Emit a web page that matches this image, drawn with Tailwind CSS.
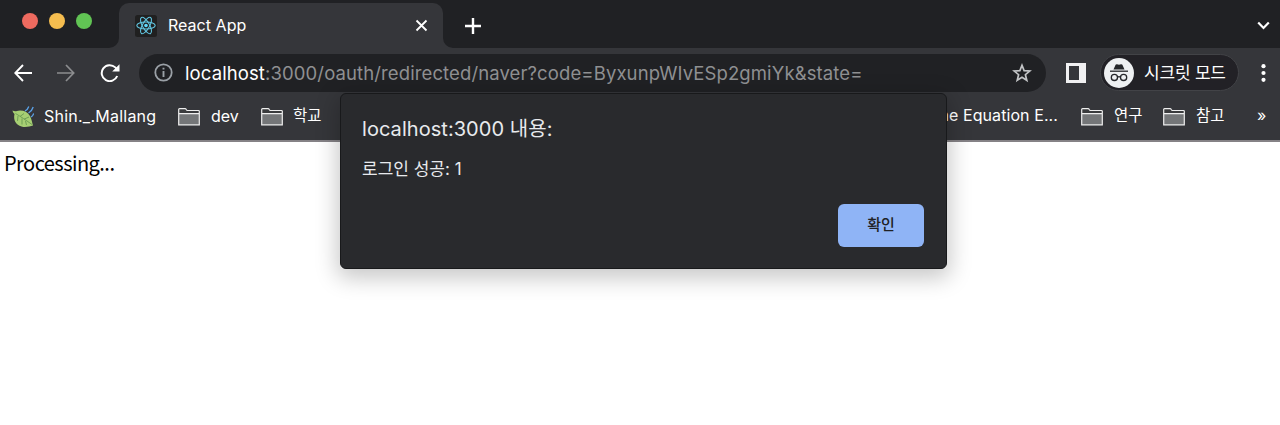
<!DOCTYPE html>
<html lang="ko">
<head>
<meta charset="utf-8">
<title>React App</title>
<script src="https://cdn.jsdelivr.net/npm/@tailwindcss/browser@4"></script>
</head>
<body class="h-[425px] w-[1280px] overflow-hidden bg-white font-['Inter','Noto_Sans_CJK_KR',sans-serif]">
<svg class="hidden">
  <symbol id="folder" viewBox="0 0 22 18">
    <path d="M.7 16.800V1.500Q.7.7 1.500.7H7Q7.800.7 8.300 1.500L9 2.500H20.500Q21.300 2.500 21.300 3.300V16.800Z" fill="#3a3b3d"/>
    <path d="M1 6H21V16.800H1Z" fill="#747678"/>
    <path d="M.7 16.800V1.500Q.7.7 1.500.7H7Q7.800.7 8.300 1.500L9 2.500H20.500Q21.300 2.500 21.300 3.300V16.800ZM1 5.600H21" fill="none" stroke="#eee" stroke-width="1.200"/>
  </symbol>
</svg>
<div class="relative h-[425px]">
  <header class="bg-[#35363a] text-white">
    <div class="flex h-12 bg-[#202124]">
      <div class="flex w-[119px] gap-[11px] pl-[22px] pt-[13px]">
        <span class="size-4 rounded-full bg-[#ee6a5f]"></span>
        <span class="size-4 rounded-full bg-[#f5bd4f]"></span>
        <span class="size-4 rounded-full bg-[#61c454]"></span>
      </div>
      <div class="relative mt-[3px] flex w-[324px] items-center rounded-t-[10px] bg-[#35363a] pl-4 pr-[15px]">
        <svg class="absolute -left-[10px] bottom-0" width="10" height="10"><path d="M10 0A10 10 0 0 1 0 10H10Z" fill="#35363a"/></svg>
        <svg class="absolute -right-[10px] bottom-0" width="10" height="10"><path d="M0 0A10 10 0 0 0 10 10H0Z" fill="#35363a"/></svg>
        <svg width="22" height="22" viewBox="0 0 22 22"><rect width="22" height="22" rx="2.500" fill="#202020"/><g fill="none" stroke="#61c5e0" stroke-width="1.100"><ellipse cx="11" cy="10.500" rx="9.200" ry="3.500"/><ellipse cx="11" cy="10.500" rx="9.200" ry="3.500" transform="rotate(60 11 10.500)"/><ellipse cx="11" cy="10.500" rx="9.200" ry="3.500" transform="rotate(120 11 10.500)"/></g><circle cx="11" cy="10.500" r="1.800" fill="#61dafb"/></svg>
        <span class="ml-[11px] pb-0.5 text-[16px] leading-6 tracking-[0.03px]">React App</span>
        <svg class="ml-auto" width="13" height="13"><path d="M1.500 1.500L11.500 11.500M11.500 1.500L1.500 11.500" stroke="#fff" stroke-width="1.800"/></svg>
      </div>
      <svg class="ml-[22px] mt-[18px]" width="16" height="16"><path d="M8 0V16M0 8H16" stroke="#fff" stroke-width="2.400"/></svg>
      <svg class="ml-auto mr-[10px] mt-[21px]" width="13" height="10"><path d="M1.200 1.500L6.500 7L11.800 1.500" fill="none" stroke="#fff" stroke-width="2.200"/></svg>
    </div>
    <div class="flex h-[49px] items-center">
      <svg class="ml-[14px]" width="18" height="18" viewBox="0 0 18 18"><path d="M9 1L1.300 9L9 17M1 9H18" fill="none" stroke="#fff" stroke-width="1.900"/></svg>
      <svg class="ml-[25px]" width="18" height="18" viewBox="0 0 18 18"><path d="M9 1L16.700 9L9 17M17 9H0" fill="none" stroke="#8c8d8f" stroke-width="1.700"/></svg>
      <svg class="ml-[25px]" width="20" height="18" viewBox="0 0 20 18"><path d="M17.200 12A8 8 0 1 1 15.300 3.400L17.500 5.600" fill="none" stroke="#fff" stroke-width="2"/><path d="M19.500 .2V7.500H12.200Z" fill="#fff"/></svg>
      <div class="ml-[19px] flex h-[38px] w-[907px] items-center rounded-full bg-[#202124] pl-[15px] pr-[14px]">
        <svg width="19" height="19" viewBox="0 0 19 19"><circle cx="9.500" cy="9.500" r="8.200" fill="none" stroke="#9aa0a6" stroke-width="1.800"/><path d="M9.500 4.700V6.600M9.500 8V14" stroke="#9aa0a6" stroke-width="1.900"/></svg>
        <span class="ml-3 whitespace-nowrap text-[18.500px] leading-6 tracking-[0.11px] text-[#8f9092]"><span class="text-white">localhost</span>:3000/oauth/redirected/naver?code=ByxunpWIvESp2gmiYk&amp;state=</span>
        <svg class="ml-auto" width="20" height="20" viewBox="0 0 20 20"><path d="M10 2.300L12.100 7.600L17.800 8L13.400 11.700L14.800 17.300L10 14.200L5.200 17.300L6.600 11.700L2.200 8L7.900 7.600Z" fill="none" stroke="#c2c4c6" stroke-width="1.700"/></svg>
      </div>
      <svg class="ml-5" width="20" height="20"><rect width="20" height="20" fill="#f1f1f2"/><rect x="3" y="3" width="10" height="14" fill="#35363a"/></svg>
      <div class="ml-[14px] flex h-[37px] w-[139px] items-center rounded-full border border-[#424347] bg-[#222126] pl-[3px]">
        <svg width="30" height="30" viewBox="0 0 30 30"><circle cx="15" cy="15" r="15" fill="#eef0f2"/><path d="M9.500 11.500L11.600 6.800Q12 6 13 6.200L15 6.700L17 6.200Q18 6 18.400 6.800L20.500 11.500Z" fill="#25262a"/><path d="M6 13.200H24" stroke="#25262a" stroke-width="1.300"/><g fill="none" stroke="#25262a" stroke-width="1.300"><circle cx="10.400" cy="19.400" r="3.100"/><circle cx="19.600" cy="19.400" r="3.100"/><path d="M13.500 19.200Q15 18.200 16.500 19.200"/></g></svg>
        <span class="ml-[10px] whitespace-nowrap text-[17px] leading-6 tracking-[-0.2px]">시크릿 모드</span>
      </div>
      <svg class="ml-[22px]" width="5" height="18"><g fill="#fff"><circle cx="2.500" cy="2.200" r="2.100"/><circle cx="2.500" cy="9" r="2.100"/><circle cx="2.500" cy="15.800" r="2.100"/></g></svg>
    </div>
    <nav class="flex h-[45px] items-start border-b-2 border-[#858286] pt-[7px] text-[16px] leading-6 whitespace-nowrap">
      <div class="flex w-[178px] items-center pl-3">
        <svg width="22" height="22" viewBox="0 0 22 22"><path d="M.5 4.500C1.500 5 2.500 5.400 4 5.300C9 3.500 15 5 18 10C19.500 13 20 16 21 19.500C18 20 14 22 9.500 20.500C4 19 1 14 2.500 8C1.500 7 .7 6 .5 4.500Z" fill="#a6cf73"/><path d="M3.500 7.500C8 10 15 15 20 18.500M6 10L5.500 15M10 12.500L10 18.500M13.500 15L14.500 19M8 10.500L12 7.500M12 13.200L17 11" fill="none" stroke="#6f9f55" stroke-width="1"/><path d="M13 5Q15.800 3.500 16.800 .5M16.500 7Q20 5 21.200 1M19 11Q21 10 21.700 7.500" fill="none" stroke="#5ba2e8" stroke-width="1.300"/></svg>
        <span class="ml-[10px] pb-0.5 tracking-[0.24px]">Shin._.Mallang</span>
      </div>
      <div class="flex w-[83px] items-center"><svg width="22" height="18"><use href="#folder"/></svg><span class="ml-[11px] pb-0.5">dev</span></div>
      <div class="flex items-center"><svg width="22" height="18"><use href="#folder"/></svg><span class="ml-[10px] pb-0.5 text-[15.5px]">학교</span></div>
      <span class="ml-auto mr-[23px] -mt-px tracking-[0.08px]">Online Equation E...</span>
      <div class="flex w-[82px] items-center"><svg width="22" height="18"><use href="#folder"/></svg><span class="ml-[11px] pb-0.5 text-[15.5px]">연구</span></div>
      <div class="flex w-[94px] items-center"><svg width="22" height="18"><use href="#folder"/></svg><span class="ml-[11px] pb-0.5 text-[15.5px]">참고</span></div>
      <span class="-mt-px w-[23px]">»</span>
    </nav>
  </header>
  <main class="pl-1 pt-[7px] font-['Noto_Sans_CJK_KR',sans-serif] text-[20px] leading-7 tracking-[-0.55px] text-black"><span class="whitespace-nowrap">Processing...</span></main>
  <section role="dialog" class="absolute left-[340px] top-[93px] flex h-[176px] w-[607px] flex-col rounded-[6px] border border-[#18191b] bg-[#292a2d] pl-[21px] pr-[22px] pt-[20px] text-[#e8eaed] shadow-[0_6px_22px_3px_rgba(0,0,0,0.22)]">
    <h1 class="whitespace-nowrap text-[20px] leading-[30px] tracking-[0.05px]"><span>localhost:3000 내용:</span></h1>
    <p class="mt-[13px] whitespace-nowrap text-[17px] leading-6"><span>로그인 성공: 1</span></p>
    <button class="mt-[23px] h-[43px] w-[86px] self-end rounded-[6px] bg-[#8fb4f6] text-[15px] font-medium text-[#202124]">확인</button>
  </section>
</div>
</body>
</html>
